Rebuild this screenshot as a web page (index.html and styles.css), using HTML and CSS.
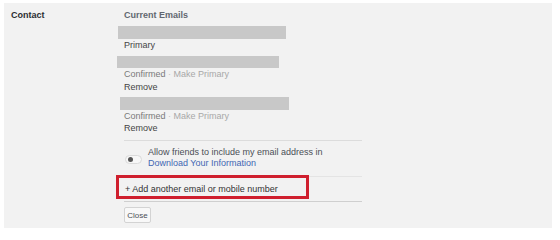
FILE: index.html
```html
<!DOCTYPE html>
<html>
<head>
<meta charset="utf-8">
<link rel="stylesheet" href="styles.css">
</head>
<body>
<div class="panel">
  <div class="label">Contact</div>
  <div class="content">
    <div class="heading">Current Emails</div>
    <div class="email e1">
      <div class="redact r1"></div>
      <div class="line">Primary</div>
    </div>
    <div class="email e2">
      <div class="redact r2"></div>
      <div class="line"><span class="muted">Confirmed</span> <span class="dot">·</span> <span class="faint">Make Primary</span></div>
      <div class="line">Remove</div>
    </div>
    <div class="email e3">
      <div class="redact r3"></div>
      <div class="line tight"><span class="muted">Confirmed</span> <span class="dot">·</span> <span class="faint">Make Primary</span></div>
      <div class="line tight">Remove</div>
    </div>
    <div class="toggle-row">
      <div class="toggle"><div class="knob"></div></div>
      <div class="toggle-text">
        <div>Allow friends to include my email address in</div>
        <div class="link">Download Your Information</div>
      </div>
    </div>
    <div class="add-row">
      <span>+ Add another email or mobile number</span>
      <div class="highlight"></div>
    </div>
    <button class="close">Close</button>
  </div>
</div>
</body>
</html>
```

FILE: styles.css
```css
html, body {
  margin: 0;
  padding: 0;
  background: #ffffff;
}
body {
  font-family: "Liberation Sans", Arial, sans-serif;
  font-size: 9px;
  color: #4b4f56;
}
.panel {
  display: flex;
  margin: 3px 8px 9px 4px;
  width: 548px;
  height: 225px;
  box-sizing: border-box;
  padding: 6px 0 5px 0;
  background: #f2f2f2;
}
.label {
  width: 120px;
  box-sizing: border-box;
  padding-left: 7px;
  font-weight: bold;
  color: #2b2d31;
  line-height: 12px;
}
.content {
  width: 238px;
  display: flex;
  flex-direction: column;
  align-items: stretch;
}
.heading {
  font-weight: bold;
  color: #616770;
  line-height: 12px;
}
.redact {
  background: #c8c8c8;
}
.r1 { margin-left: -6px; width: 168px; height: 13px; }
.r2 { margin-left: -7px; width: 162px; height: 12px; }
.r3 { margin-left: -4px; width: 169px; height: 13px; }
.e1 { margin-top: 5px; }
.e2 { margin-top: 4px; }
.e3 { margin-top: 3px; }
.line {
  line-height: 13px;
  color: #444;
}
.line.tight { line-height: 12px; }
.muted { color: #7a7a7a; }
.dot { color: #c0c0c0; }
.faint { color: #a8a8a8; }
.toggle-row {
  margin-top: 6px;
  border-top: 1px solid #dcdcdc;
  padding: 6px 0 7px 0;
  display: flex;
  align-items: center;
  border-bottom: 1px solid #e4e4e4;
}
.toggle {
  width: 17px;
  height: 9px;
  box-sizing: border-box;
  margin: 2px 6px 0 1px;
  border-radius: 5px;
  background: #f7f7f7;
  border: 1px solid #dadada;
  display: flex;
  align-items: center;
  padding-left: 2px;
}
.knob {
  width: 5px;
  height: 5px;
  border-radius: 50%;
  background: #555;
}
.toggle-text {
  line-height: 11px;
  color: #4b4f56;
}
.link {
  color: #4267b2;
}
.add-row {
  position: relative;
  padding: 6px 0 6px 1px;
  line-height: 12px;
  border-bottom: 1px solid #cfcfcf;
  color: #333;
}
.highlight {
  position: absolute;
  left: -8px;
  top: -2px;
  width: 193px;
  height: 24px;
  box-sizing: border-box;
  border: 3px solid #cf1f2e;
}
.close {
  align-self: flex-start;
  margin-top: 5px;
  width: 27px;
  height: 16px;
  padding: 0;
  font-family: "Liberation Sans", Arial, sans-serif;
  font-size: 8px;
  color: #4b4f56;
  background: #f8f8f8;
  border: 1px solid #d3d3d3;
  border-radius: 2px;
}
```
